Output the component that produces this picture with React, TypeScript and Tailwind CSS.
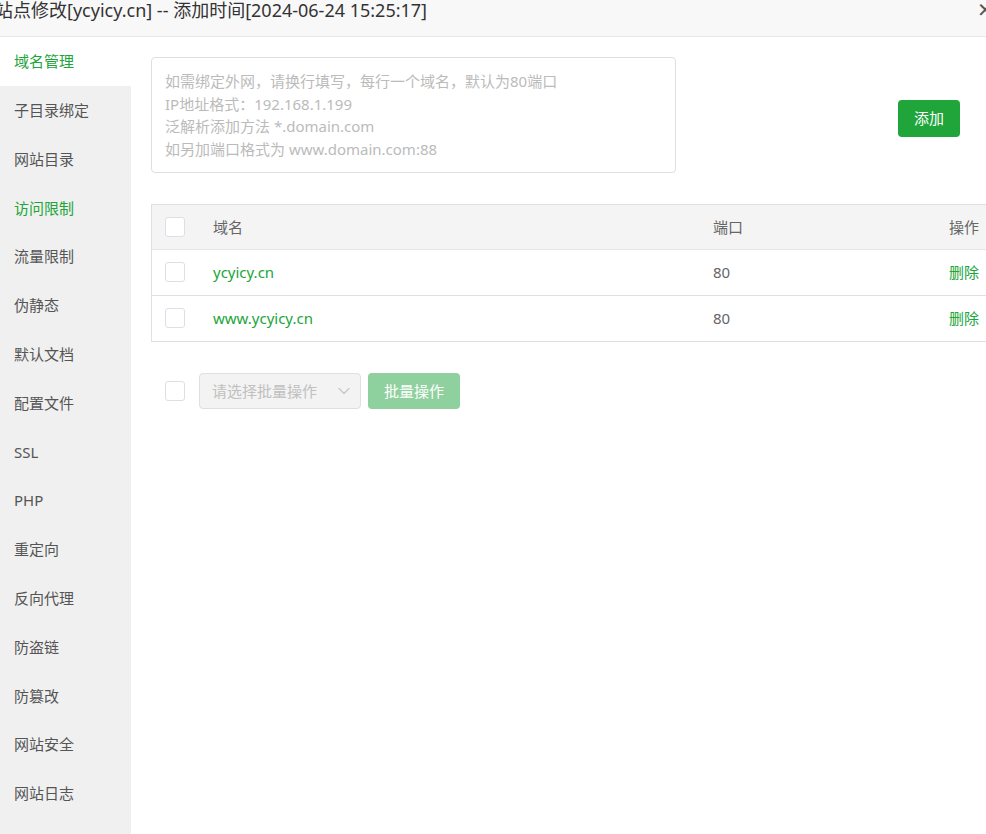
import { ChevronDown } from "lucide-react";

const menu = [
  "域名管理",
  "子目录绑定",
  "网站目录",
  "访问限制",
  "流量限制",
  "伪静态",
  "默认文档",
  "配置文件",
  "SSL",
  "PHP",
  "重定向",
  "反向代理",
  "防盗链",
  "防篡改",
  "网站安全",
  "网站日志",
];

const domains = [
  { name: "ycyicy.cn", port: 80 },
  { name: "www.ycyicy.cn", port: 80 },
];

function Check() {
  return <span className="block w-[20px] h-[20px] rounded-[3px] border border-[#dcdfe6] bg-white" />;
}

export default function App() {
  return (
    <div
      className="w-[986px] h-[834px] overflow-hidden bg-white text-[#333]"
      style={{ fontFamily: '"Noto Sans", "Noto Sans CJK SC", sans-serif' }}
    >
      {/* title bar */}
      <div className="relative h-[37px] bg-[#f8f8f8] border-b border-[#e8e8e8]">
        <div className="absolute left-[-5px] top-[-4px] text-[18px] leading-[28px] text-[#333] whitespace-nowrap">
          站点修改[ycyicy.cn] -- 添加时间[2024-06-24 15:25:17]
        </div>
        <span className="absolute right-[-8px] top-[-2px] text-[20px] leading-[24px] text-[#555]">✕</span>
      </div>

      <div className="flex h-[797px]">
        {/* sidebar */}
        <div className="w-[131px] shrink-0 bg-[#f0f0f0]">
          {menu.map((m, i) => (
            <div
              key={m}
              className={
                "h-[48.8px] flex items-center pl-[14px] text-[15px] " +
                (i === 0 ? "bg-white text-[#20a53a]" : i === 3 ? "text-[#20a53a]" : "text-[#555]")
              }
            >
              {m}
            </div>
          ))}
        </div>

        {/* content */}
        <div className="flex-1 pl-[20px] pt-[20px]">
          <div className="flex items-center">
            <div className="w-[525px] h-[116px] rounded-[4px] border border-[#dcdfe6] px-[13px] pt-[12px] text-[15px] leading-[22.6px] text-[#bbb]">
              <div>如需绑定外网，请换行填写，每行一个域名，默认为80端口</div>
              <div>IP地址格式：192.168.1.199</div>
              <div>泛解析添加方法 *.domain.com</div>
              <div>如另加端口格式为 www.domain.com:88</div>
            </div>
            <button className="ml-[222px] mt-[6px] w-[62px] h-[37px] rounded-[4px] bg-[#20a53a] text-white text-[15px]">
              添加
            </button>
          </div>

          <div className="mt-[31px] w-[860px] border border-[#e0e0e0] text-[15px]">
            <div className="flex items-center h-[45px] bg-[#f4f4f4] border-b border-[#e6e6e6] text-[#666]">
              <div className="w-[61px] pl-[13px]">
                <Check />
              </div>
              <div className="w-[500px]">域名</div>
              <div className="w-[236px]">端口</div>
              <div>操作</div>
            </div>
            {domains.map((d, i) => (
              <div
                key={d.name}
                className={"flex items-center h-[45.5px] " + (i === 0 ? "border-b border-[#e0e0e0]" : "")}
              >
                <div className="w-[61px] pl-[13px]">
                  <Check />
                </div>
                <div className="w-[500px] text-[#20a53a]">{d.name}</div>
                <div className="w-[236px] text-[#666]">{d.port}</div>
                <div className="text-[#20a53a]">删除</div>
              </div>
            ))}
          </div>

          <div className="mt-[31px] flex items-center pl-[14px]">
            <Check />
            <div className="ml-[14px] w-[162px] h-[36px] flex items-center justify-between rounded-[4px] border border-[#dcdfe6] bg-[#f3f3f3] pl-[12px] pr-[6px] text-[15px] text-[#c0c0c0]">
              <span>请选择批量操作</span>
              <ChevronDown size={20} strokeWidth={1.5} color="#c8c8c8" />
            </div>
            <button className="ml-[7px] w-[92px] h-[36px] rounded-[4px] bg-[#8fd19e] text-white text-[15px]">
              批量操作
            </button>
          </div>
        </div>
      </div>
    </div>
  );
}
